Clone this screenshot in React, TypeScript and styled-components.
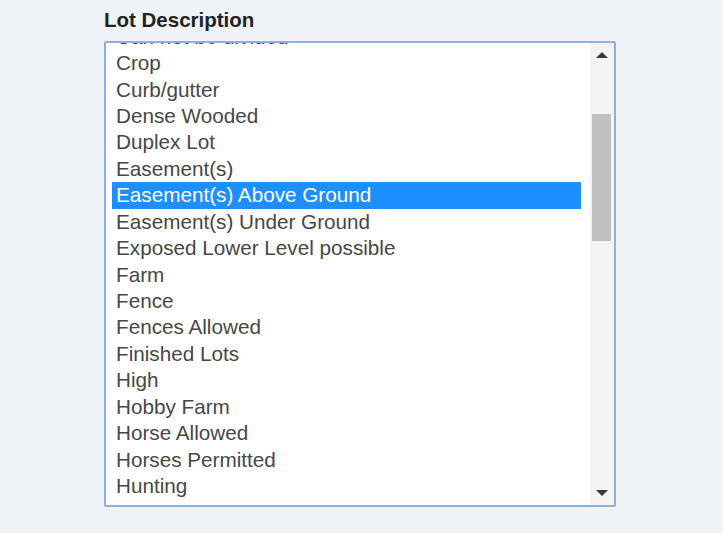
import React, { useLayoutEffect, useRef } from "react";
import styled, { createGlobalStyle } from "styled-components";

const GlobalStyle = createGlobalStyle`
  html, body { margin: 0; padding: 0; background: #eff2f7; }
  body { font-family: "Liberation Sans", Arial, sans-serif; }
`;

const ITEMS = [
  "Additional Land Available",
  "Agricultural",
  "Borders Golf Course",
  "Buildable",
  "Bush",
  "Can be divided",
  "Can not be divided",
  "Crop",
  "Curb/gutter",
  "Dense Wooded",
  "Duplex Lot",
  "Easement(s)",
  "Easement(s) Above Ground",
  "Easement(s) Under Ground",
  "Exposed Lower Level possible",
  "Farm",
  "Fence",
  "Fences Allowed",
  "Finished Lots",
  "High",
  "Hobby Farm",
  "Horse Allowed",
  "Horses Permitted",
  "Hunting",
  "Irregular Lot",
  "Irrigation",
  "Lake Access",
  "Landscaped",
  "Level",
  "Livestock Allowed",
  "Mature Trees",
  "Near Golf Course",
  "Near Public Transit",
  "Open Lot",
  "Partially Wooded",
  "Pasture",
  "Paved Frontage",
  "Pie Shaped Lot",
  "Private",
  "Rolling",
  "Rural",
  "Secluded",
  "Sloped",
  "Subdivided",
  "Tillable",
  "Timber",
  "Underground Utilities",
  "Views",
  "Walkout",
  "Waterfront",
  "Wetlands",
  "Wooded",
  "Zero Lot Line",
  "Zoned Agricultural",
  "Zoned Commercial",
  "Zoned Residential",
  "Other",
];

const SELECTED = "Easement(s) Above Ground";
const ITEM_H = 26.44;
const VIEW_H = 462;
const ARROW_H = 24;
const SCROLL_TOP = 7 * ITEM_H - 6.8;

const Page = styled.div`
  padding: 8px 0 0 104px;
`;

const Label = styled.div`
  font-family: "Liberation Sans", Arial, sans-serif;
  font-weight: 700;
  font-size: 20.5px;
  line-height: 24px;
  color: #222;
  margin-bottom: 9px;
`;

const Box = styled.div`
  width: 508px;
  height: ${VIEW_H}px;
  border: 2px solid #8db1de;
  border-radius: 2px;
  background: #fff;
  display: flex;
`;

const List = styled.div`
  flex: 1;
  height: 100%;
  overflow-y: scroll;
  scrollbar-width: none;
  padding: 0 9px 0 6px;
  &::-webkit-scrollbar { display: none; }
`;

const Option = styled.div<{ $selected?: boolean }>`
  height: ${ITEM_H}px;
  line-height: ${ITEM_H}px;
  padding-left: 4px;
  font-size: 20.7px;
  white-space: nowrap;
  color: ${(p) => (p.$selected ? "#fff" : "#474747")};
  background: ${(p) => (p.$selected ? "#1e8fff" : "transparent")};
`;

const ScrollBar = styled.div`
  width: 24px;
  height: 100%;
  background: #f4f4f4;
  display: flex;
  flex-direction: column;
`;

const ArrowBtn = styled.div`
  height: ${ARROW_H}px;
  display: flex;
  align-items: center;
  justify-content: center;
`;

const Arrow = styled.div<{ $down?: boolean }>`
  width: 0;
  height: 0;
  border-left: 6px solid transparent;
  border-right: 6px solid transparent;
  ${(p) =>
    p.$down
      ? "border-top: 6px solid #3a3a3a;"
      : "border-bottom: 6px solid #3a3a3a;"}
`;

const Track = styled.div`
  flex: 1;
  position: relative;
`;

const Thumb = styled.div`
  position: absolute;
  left: 2px;
  right: 3px;
  background: #c1c1c1;
`;

export default function App() {
  const listRef = useRef<HTMLDivElement>(null);

  useLayoutEffect(() => {
    if (listRef.current) listRef.current.scrollTop = SCROLL_TOP;
  }, []);

  const contentH = ITEMS.length * ITEM_H;
  const trackH = VIEW_H - 2 * ARROW_H;
  const thumbH = (VIEW_H / contentH) * trackH;
  const thumbTop = (SCROLL_TOP / (contentH - VIEW_H)) * (trackH - thumbH) - 2;

  return (
    <>
      <GlobalStyle />
      <Page>
        <Label>Lot Description</Label>
        <Box>
          <List ref={listRef}>
            {ITEMS.map((item) => (
              <Option key={item} $selected={item === SELECTED}>
                {item}
              </Option>
            ))}
          </List>
          <ScrollBar>
            <ArrowBtn>
              <Arrow />
            </ArrowBtn>
            <Track>
              <Thumb style={{ top: thumbTop, height: thumbH }} />
            </Track>
            <ArrowBtn>
              <Arrow $down />
            </ArrowBtn>
          </ScrollBar>
        </Box>
      </Page>
    </>
  );
}
